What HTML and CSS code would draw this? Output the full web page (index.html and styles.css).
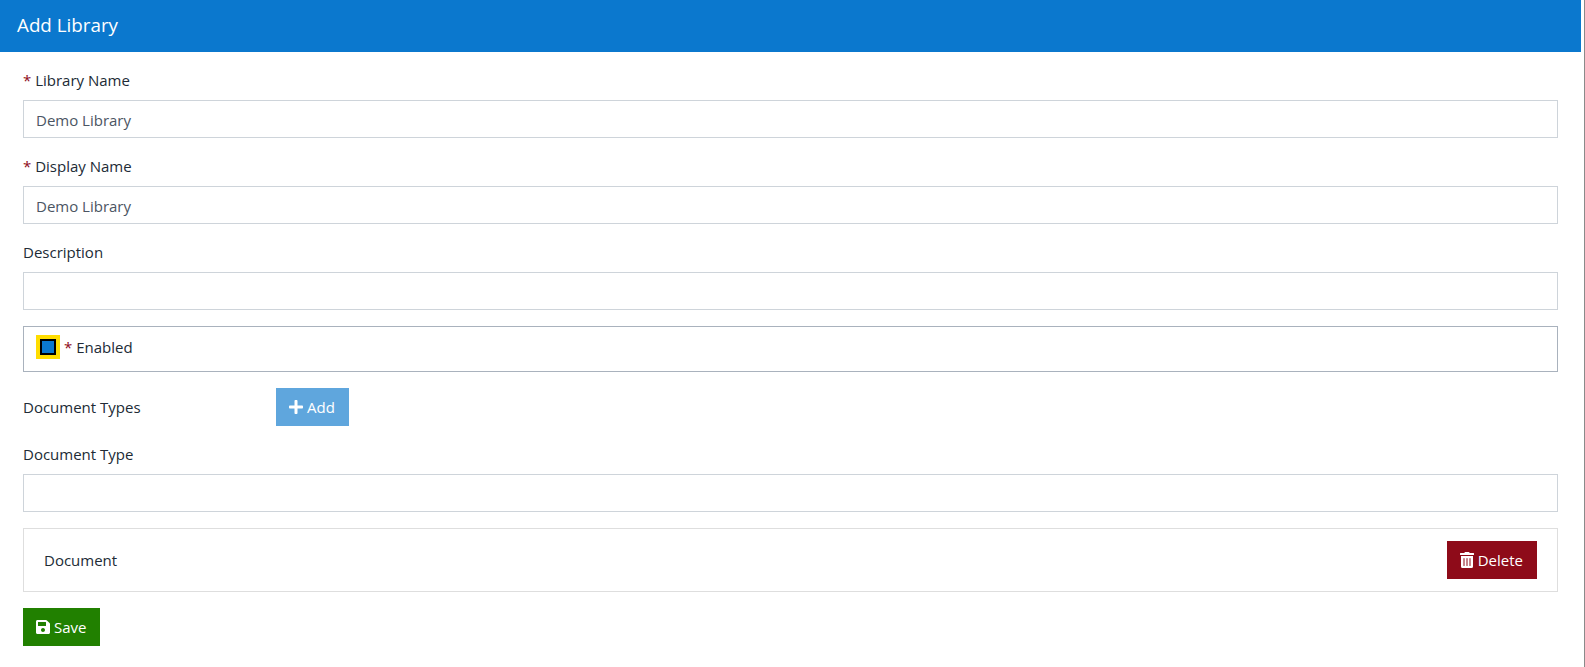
FILE: index.html
```html
<!DOCTYPE html>
<html lang="en">
<head>
<meta charset="utf-8">
<title>Add Library</title>
<link rel="stylesheet" href="styles.css">
</head>
<body>
<div class="page">
  <header class="title-bar"><h1 class="title">Add Library</h1></header>
  <form class="form">
    <div class="group">
      <label class="label"><span class="req">*</span> Library Name</label>
      <input class="input" type="text" value="Demo Library">
    </div>
    <div class="group">
      <label class="label"><span class="req">*</span> Display Name</label>
      <input class="input" type="text" value="Demo Library">
    </div>
    <div class="group">
      <label class="label">Description</label>
      <input class="input" type="text">
    </div>
    <div class="check-box">
      <input class="check" type="checkbox" checked>
      <span class="check-label"><span class="req">*</span> Enabled</span>
    </div>
    <div class="types-row">
      <span class="types-label">Document Types</span>
      <button class="btn btn-add" type="button">
        <svg class="icon" viewBox="0 0 448 512"><path d="M416 208H272V64c0-17.670-14.330-32-32-32h-32c-17.670 0-32 14.330-32 32v144H32c-17.670 0-32 14.330-32 32v32c0 17.670 14.330 32 32 32h144v144c0 17.670 14.330 32 32 32h32c17.670 0 32-14.330 32-32V304h144c17.670 0 32-14.330 32-32v-32c0-17.670-14.330-32-32-32z"/></svg>Add
      </button>
    </div>
    <div class="group">
      <label class="label">Document Type</label>
      <input class="input" type="text">
    </div>
    <div class="card">
      <span>Document</span>
      <button class="btn btn-delete" type="button">
        <svg class="icon" viewBox="0 0 448 512"><path d="M32 464a48 48 0 0 0 48 48h288a48 48 0 0 0 48-48V128H32zm272-256a16 16 0 0 1 32 0v224a16 16 0 0 1-32 0zm-96 0a16 16 0 0 1 32 0v224a16 16 0 0 1-32 0zm-96 0a16 16 0 0 1 32 0v224a16 16 0 0 1-32 0zM432 32H312l-9.400-18.700A24 24 0 0 0 281.100 0H166.800a23.720 23.720 0 0 0-21.400 13.300L136 32H16A16 16 0 0 0 0 48v32a16 16 0 0 0 16 16h416a16 16 0 0 0 16-16V48a16 16 0 0 0-16-16z"/></svg>Delete
      </button>
    </div>
    <button class="btn btn-save" type="button">
      <svg class="icon" viewBox="0 0 448 512"><path d="M433.941 129.941l-83.882-83.882A48 48 0 0 0 316.118 32H48C21.490 32 0 53.490 0 80v352c0 26.510 21.490 48 48 48h352c26.510 0 48-21.490 48-48V163.882a48 48 0 0 0-14.059-33.941zM224 416c-35.346 0-64-28.654-64-64 0-35.346 28.654-64 64-64s64 28.654 64 64c0 35.346-28.654 64-64 64zm96-304.520V212c0 6.627-5.373 12-12 12H76c-6.627 0-12-5.373-12-12V108c0-6.627 5.373-12 12-12h228.520c3.183 0 6.235 1.264 8.485 3.515l3.480 3.480A11.996 11.996 0 0 1 320 111.480z"/></svg>Save
    </button>
  </form>
</div>
</body>
</html>
```
FILE: styles.css
```css
* { box-sizing: border-box; }
html, body { height: 100%; }
body {
  margin: 0;
  padding-right: 3px;
  border-right: 1px solid #8a8a8a;
  background: #fff;
  color: #212b36;
  font-family: "Open Sans", "Noto Sans", sans-serif;
  font-size: 15px;
  line-height: 24px;
  overflow: hidden;
}
.page { width: 1581px; }
.title-bar {
  height: 52px;
  background: #0b78ce;
  padding: 0 17px 2px;
  display: flex;
  align-items: center;
}
.title { margin: 0; font-size: 18.8px; font-weight: 400; color: #fff; }
.form { padding: 16px 23px; display: flex; flex-direction: column; gap: 16px; align-items: stretch; }
.group { display: flex; flex-direction: column; }
.label { height: 24px; margin-bottom: 8px; }
.req { color: #8e0b19; }
.input {
  height: 38px;
  border: 1px solid #ced4da;
  padding: 1px 12px 0;
  font: inherit;
  color: #4b5563;
  background: #fff;
  border-radius: 0;
  outline: none;
}
.check-box {
  height: 46px;
  border: 1px solid #a9b2bd;
  padding: 0 0 4px 16px;
  display: flex;
  align-items: center;
}
.check {
  appearance: none;
  width: 16px;
  height: 16px;
  margin: 0 8px 0 0;
  background: #0b78ce;
  border: 2px solid #000;
  outline: 4px solid #ffdd00;
}
.check-label { margin-top: -1px; }
.types-row { display: flex; align-items: center; height: 38px; }
.types-label { width: 253px; }
.btn {
  height: 38px;
  border: 0;
  border-radius: 0;
  color: #fff;
  font: inherit;
  display: inline-flex;
  align-items: center;
  padding: 0 14px 0 13px;
}
.icon { width: 14px; height: 16px; fill: currentColor; margin-right: 4px; flex: none; }
.btn-add { background: #5fa6dd; }
.btn-delete { background: #8e0b19; }
.btn-save { background: #218000; align-self: flex-start; }
.card {
  height: 64px;
  border: 1px solid #dedede;
  padding: 0 20px;
  display: flex;
  align-items: center;
  justify-content: space-between;
}
```
